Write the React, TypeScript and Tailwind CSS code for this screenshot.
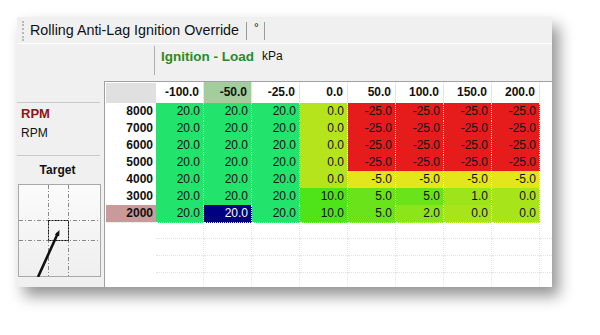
import React from 'react';

type Cell = [string, string];

const bg: Record<string, string> = {
  g: 'bg-[#22e36b]',
  l: 'bg-[#b6e41c]',
  r: 'bg-[#e61c1c]',
  y: 'bg-[#e2e61a]',
  g10: 'bg-[#4fe31a]',
  g5: 'bg-[#6be31a]',
  g2: 'bg-[#8ce41a]',
  g1: 'bg-[#9ee41a]',
  g0: 'bg-[#a8e41a]',
  sel: 'bg-[#000080] text-white',
};

const cols = ['-100.0', '-50.0', '-25.0', '0.0', '50.0', '100.0', '150.0', '200.0'];

const hot: Cell[] = [['20.0', 'g'], ['20.0', 'g'], ['20.0', 'g'], ['0.0', 'l'], ['-25.0', 'r'], ['-25.0', 'r'], ['-25.0', 'r'], ['-25.0', 'r']];

const rows: { rpm: string; cells: Cell[]; active?: boolean }[] = [
  { rpm: '8000', cells: hot },
  { rpm: '7000', cells: hot },
  { rpm: '6000', cells: hot },
  { rpm: '5000', cells: hot },
  { rpm: '4000', cells: [['20.0', 'g'], ['20.0', 'g'], ['20.0', 'g'], ['0.0', 'l'], ['-5.0', 'y'], ['-5.0', 'y'], ['-5.0', 'y'], ['-5.0', 'y']] },
  { rpm: '3000', cells: [['20.0', 'g'], ['20.0', 'g'], ['20.0', 'g'], ['10.0', 'g10'], ['5.0', 'g5'], ['5.0', 'g5'], ['1.0', 'g1'], ['0.0', 'g0']] },
  { rpm: '2000', active: true, cells: [['20.0', 'g'], ['20.0', 'sel'], ['20.0', 'g'], ['10.0', 'g10'], ['5.0', 'g5'], ['2.0', 'g2'], ['0.0', 'g0'], ['0.0', 'g0']] },
];

const gridCols = 'grid grid-cols-[50px_repeat(8,48px)_1fr]';

function TargetChart() {
  return (
    <svg width="83" height="93" viewBox="0 0 83 93" className="block">
      <defs>
        <linearGradient id="tg" x1="0" y1="0" x2="0" y2="1">
          <stop offset="0" stopColor="#fbfbfb" />
          <stop offset="1" stopColor="#efefef" />
        </linearGradient>
      </defs>
      <rect x="0.5" y="0.5" width="82" height="92" fill="url(#tg)" stroke="#a8a8a8" />
      <g stroke="#8a8a8a" strokeWidth="1" strokeDasharray="4 2 1 2">
        <line x1="30.5" y1="1" x2="30.5" y2="92" />
        <line x1="50.5" y1="1" x2="50.5" y2="92" />
        <line x1="1" y1="36.5" x2="82" y2="36.5" />
        <line x1="1" y1="56.5" x2="82" y2="56.5" />
      </g>
      <rect x="30.5" y="36.5" width="20" height="20" fill="none" stroke="#111" strokeDasharray="2 1" />
      <line x1="20" y1="93" x2="40" y2="49" stroke="#111" strokeWidth="2.6" />
      <path d="M41.5 46 L36.8 50.5 L41.2 52.2 Z" fill="#111" />
    </svg>
  );
}

export default function App() {
  return (
    <div className="w-[600px] h-[335px] bg-white pt-[17px] pl-[17px] font-['Liberation_Sans',Arial,sans-serif] text-[#111]">
      <div className="w-[535px] h-[270px] bg-[#f0f0f0] flex flex-col shadow-[7px_9px_14px_rgba(0,0,0,0.42)]">
        {/* tab strip */}
        <div className="h-[27px] flex items-center border-b border-white shrink-0 pt-px">
          <div className="ml-[5px] h-[20px] w-[2px] border-l-2 border-dotted border-[#b8b8b8]" />
          <span className="ml-[6px] text-[14.3px] text-[#111] leading-none">Rolling Anti-Lag Ignition Override</span>
          <div className="ml-[7px] h-[18px] w-px bg-[#9a9a9a]" />
          <span className="ml-[7px] text-[12px] leading-none -mt-[5px]">°</span>
          <div className="ml-[5px] h-[18px] w-px bg-[#9a9a9a]" />
        </div>

        <div className="flex-1 flex min-h-0">
          {/* left panel */}
          <div className="w-[87px] shrink-0 flex flex-col">
            <div className="h-[59px] mr-[4px] border-b border-[#c8c8c8]" />
            <div className="h-[53px] mr-[4px] border-b border-[#c8c8c8] pl-[4px] pt-[3px]">
              <div className="text-[13px] font-bold text-[#8b1414] leading-[16px]">RPM</div>
              <div className="text-[12px] leading-[16px] mt-[3px]">RPM</div>
            </div>
            <div className="h-[28px] flex items-center justify-center pr-[6px] text-[12px] font-bold">Target</div>
            <div className="ml-[1px]">
              <TargetChart />
            </div>
          </div>

          {/* right side */}
          <div className="flex-1 flex flex-col min-w-0">
            <div className="h-[37px] shrink-0 flex">
              <div className="w-[51px] shrink-0 flex items-center">
                <div className="ml-auto h-[29px] w-px bg-[#b0b0b0] -mt-[4px]" />
              </div>
              <div className="pl-[6px] pt-[4px] flex items-start gap-[8px]">
                <span className="text-[13.5px] font-bold text-[#2a8a2a] leading-[18px]">Ignition - Load</span>
                <span className="text-[12px] leading-[16px]">kPa</span>
              </div>
            </div>

            <div className="flex-1 bg-white border-t border-l border-[#a0a0a0] overflow-hidden pl-px">
              {/* header row */}
              <div className={`${gridCols} h-[21px]`}>
                <div className="bg-[#e0e0e0] mt-px" />
                {cols.map((c, i) => (
                  <div
                    key={c}
                    className={`text-[12px] font-bold text-right pr-[4px] leading-[21px] border-r border-[#e6e6e6] ${i === 1 ? 'bg-[#a3cd9c]' : 'bg-white'}`}
                  >
                    {c}
                  </div>
                ))}
                <div />
              </div>

              {rows.map((r) => (
                <div key={r.rpm} className={`${gridCols} h-[17px]`}>
                  <div
                    className={`text-[12px] font-bold text-right pr-[3px] leading-[17px] border-b border-[#ececec] ${r.active ? 'bg-[#c99a9a]' : 'bg-white'}`}
                  >
                    {r.rpm}
                  </div>
                  {r.cells.map(([v, k], i) => (
                    <div
                      key={i}
                      className={`text-[12px] text-right pr-[3px] leading-[16px] border-r border-b border-dotted border-white ${bg[k]}`}
                    >
                      {v}
                    </div>
                  ))}
                  <div />
                </div>
              ))}

              {[0, 1, 2, 3].map((n) => (
                <div key={n} className={`${gridCols} h-[17px]`}>
                  <div />
                  {cols.map((c) => (
                    <div key={c} className="border-r border-b border-dotted border-[#e2e2e2]" />
                  ))}
                  <div className="border-b border-dotted border-[#e2e2e2]" />
                </div>
              ))}
            </div>
          </div>
        </div>
      </div>
    </div>
  );
}
